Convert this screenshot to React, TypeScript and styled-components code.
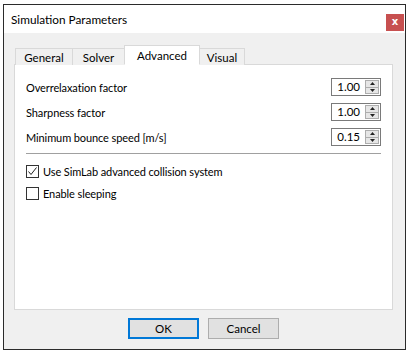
import React from "react";
import styled, { createGlobalStyle } from "styled-components";

const FONT = `Lato, "Noto Sans", sans-serif`;

const Global = createGlobalStyle`
  html, body { margin: 0; padding: 0; background: #ffffff; }
  body { font-family: ${FONT}; font-size: 11px; color: #000; }
`;

const Page = styled.div`
  padding: 4px 0 0 3px;
`;

const Window = styled.div`
  box-sizing: border-box;
  width: 403px;
  height: 346px;
  border: 1px solid #2b2b2b;
  display: flex;
  flex-direction: column;
  background: #f0f0f0;
`;

const TitleBar = styled.div`
  height: 28px;
  background: #ffffff;
  display: flex;
  align-items: center;
  justify-content: space-between;
  padding-left: 7px;
  padding-right: 1px;
`;

const Title = styled.span`
  font-size: 11.8px;
  line-height: 16px;
  margin-top: 1px;
`;

const CloseButton = styled.div`
  width: 18px;
  height: 17px;
  background: #c75050;
  color: #fff;
  font-family: "DejaVu Sans", sans-serif;
  font-weight: bold;
  font-size: 10px;
  line-height: 16px;
  text-align: center;
  align-self: flex-end;
  margin-bottom: 2px;
`;

const Body = styled.div`
  flex: 1;
  display: flex;
  flex-direction: column;
  padding: 12px 12px 10px 10px;
`;

const TabBar = styled.div`
  display: flex;
  align-items: flex-end;
  padding-left: 1px;
  margin-bottom: -1px;
  position: relative;
  z-index: 1;
`;

const Tab = styled.div<{ $active?: boolean; $w: number }>`
  box-sizing: border-box;
  width: ${(p) => p.$w}px;
  height: ${(p) => (p.$active ? 20 : 17)}px;
  border: 1px solid #d9d9d9;
  border-bottom: ${(p) => (p.$active ? "1px solid #ffffff" : "none")};
  background: ${(p) => (p.$active ? "#ffffff" : "#f0f0f0")};
  margin-left: -1px;
  display: flex;
  align-items: center;
  justify-content: center;
  padding-top: ${(p) => (p.$active ? 0 : 1)}px;
  font-size: 11.5px;
  position: relative;
  z-index: ${(p) => (p.$active ? 2 : 1)};
  &:first-child { margin-left: 0; }
`;

const Panel = styled.div`
  box-sizing: border-box;
  height: 246px;
  background: #ffffff;
  border: 1px solid #d9d9d9;
  padding: 13px 11px 0 11px;
  display: flex;
  flex-direction: column;
`;

const ParamList = styled.div`
  display: flex;
  flex-direction: column;
  gap: 7px;
`;

const ParamRow = styled.div`
  display: flex;
  align-items: center;
  justify-content: space-between;
  height: 18px;
`;

const Label = styled.span`
  font-size: 11px;
  letter-spacing: -0.1px;
`;

const SpinBox = styled.div`
  box-sizing: border-box;
  width: 50px;
  height: 18px;
  border: 1px solid #7a7a7a;
  display: flex;
  align-items: stretch;
  background: #fff;
`;

const SpinValue = styled.div`
  flex: 1;
  text-align: right;
  padding-right: 5px;
  font-size: 11.5px;
  line-height: 16px;
`;

const SpinButtons = styled.div`
  width: 14px;
  display: flex;
  flex-direction: column;
  padding: 1px 1px 1px 0;
`;

const SpinButton = styled.div`
  flex: 1;
  box-sizing: border-box;
  border: 1px solid #adadad;
  background: #e6e6e6;
  display: flex;
  align-items: center;
  justify-content: center;
  &:last-child { border-top: none; }
`;

const Separator = styled.div`
  height: 1px;
  background: #a0a0a0;
  margin-top: 7px;
`;

const CheckList = styled.div`
  display: flex;
  flex-direction: column;
  gap: 4px;
  margin-top: 8px;
`;

const CheckRow = styled.label`
  display: flex;
  align-items: center;
  gap: 4px;
  height: 18px;
`;

const CheckBox = styled.span`
  box-sizing: border-box;
  width: 13px;
  height: 13px;
  border: 1px solid #333333;
  background: #fff;
  display: flex;
  align-items: center;
  justify-content: center;
`;

const ButtonRow = styled.div`
  display: flex;
  justify-content: center;
  gap: 9px;
  margin-top: auto;
`;

const Button = styled.button<{ $default?: boolean }>`
  box-sizing: border-box;
  width: 71px;
  height: 21px;
  background: #e1e1e1;
  border: ${(p) => (p.$default ? "2px solid #0078d7" : "1px solid #adadad")};
  font-family: ${FONT};
  font-size: 11.5px;
  color: #000;
  padding: 0;
  line-height: 16px;
`;

const Arrow = ({ up }: { up?: boolean }) => (
  <svg width="5" height="3" viewBox="0 0 5 3">
    <polygon points={up ? "2.5,0 5,3 0,3" : "0,0 5,0 2.5,3"} fill="#222" />
  </svg>
);

const Spin = ({ value }: { value: string }) => (
  <SpinBox>
    <SpinValue>{value}</SpinValue>
    <SpinButtons>
      <SpinButton>
        <Arrow up />
      </SpinButton>
      <SpinButton>
        <Arrow />
      </SpinButton>
    </SpinButtons>
  </SpinBox>
);

const Check = ({ checked, label }: { checked?: boolean; label: string }) => (
  <CheckRow>
    <CheckBox>
      {checked && (
        <svg width="11" height="11" viewBox="0 0 11 11">
          <polyline points="1.5,5.5 4,8.5 9.5,1.5" fill="none" stroke="#222" strokeWidth="1" />
        </svg>
      )}
    </CheckBox>
    <Label>{label}</Label>
  </CheckRow>
);

const tabs = [
  { name: "General", w: 58 },
  { name: "Solver", w: 53 },
  { name: "Advanced", w: 76, active: true },
  { name: "Visual", w: 46 },
];

const params = [
  { label: "Overrelaxation factor", value: "1.00" },
  { label: "Sharpness factor", value: "1.00" },
  { label: "Minimum bounce speed [m/s]", value: "0.15" },
];

export default function App() {
  return (
    <>
      <Global />
      <Page>
        <Window>
          <TitleBar>
            <Title>Simulation Parameters</Title>
            <CloseButton>x</CloseButton>
          </TitleBar>
          <Body>
            <TabBar>
              {tabs.map((t) => (
                <Tab key={t.name} $w={t.w} $active={t.active}>
                  {t.name}
                </Tab>
              ))}
            </TabBar>
            <Panel>
              <ParamList>
                {params.map((p) => (
                  <ParamRow key={p.label}>
                    <Label>{p.label}</Label>
                    <Spin value={p.value} />
                  </ParamRow>
                ))}
              </ParamList>
              <Separator />
              <CheckList>
                <Check checked label="Use SimLab advanced collision system" />
                <Check label="Enable sleeping" />
              </CheckList>
            </Panel>
            <ButtonRow>
              <Button $default>OK</Button>
              <Button>Cancel</Button>
            </ButtonRow>
          </Body>
        </Window>
      </Page>
    </>
  );
}
